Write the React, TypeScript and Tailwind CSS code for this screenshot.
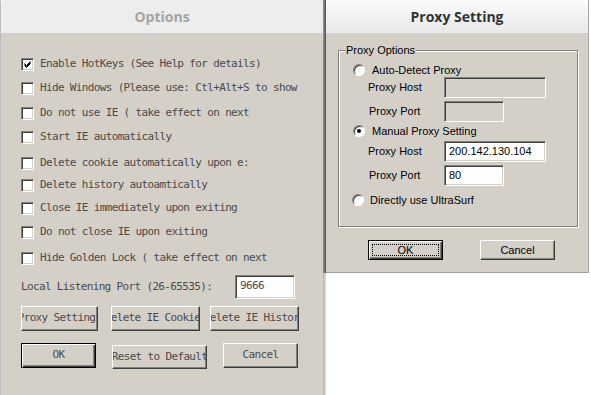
const rows = [
  { text: "Enable HotKeys (See Help for details)", checked: true, mt: "mt-0" },
  { text: "Hide Windows (Please use: Ctl+Alt+S to show", mt: "mt-[11px]" },
  { text: "Do not use IE ( take effect on next", mt: "mt-[12px]" },
  { text: "Start IE automatically", mt: "mt-[11px]" },
  { text: "Delete cookie automatically upon e:", mt: "mt-[13px]" },
  { text: "Delete history autoamtically", mt: "mt-[9px]" },
  { text: "Close IE immediately upon exiting", mt: "mt-[10px]" },
  { text: "Do not close IE upon exiting", mt: "mt-[11px]" },
  { text: "Hide Golden Lock ( take effect on next", mt: "mt-[13px]" },
];

function CheckBox({ checked }: { checked?: boolean }) {
  return (
    <div className="w-[13px] h-[13px] shrink-0 bg-white border border-t-[#808080] border-l-[#808080] border-r-white border-b-white shadow-[inset_1px_1px_0_#404040,inset_-1px_-1px_0_#d4d0c8] flex items-center justify-center">
      {checked && (
        <svg width="9" height="9" viewBox="0 0 9 9">
          <path d="M1.5 3.5 L3.5 5.5 L7.5 1.5 M1.5 4.5 L3.5 6.5 L7.5 2.5 M1.5 5.5 L3.5 7.5 L7.5 3.5" stroke="#000" strokeWidth="1" fill="none" />
        </svg>
      )}
    </div>
  );
}

function Radio({ checked }: { checked?: boolean }) {
  return (
    <div className="w-[12px] h-[12px] shrink-0 rounded-full bg-white border border-t-[#808080] border-l-[#808080] border-r-white border-b-white shadow-[inset_1px_1px_0_#404040] flex items-center justify-center">
      {checked && <div className="w-[4px] h-[4px] rounded-full bg-black" />}
    </div>
  );
}

function MonoButton({ label, w, h = "h-[25px]", def }: { label: string; w: string; h?: string; def?: boolean }) {
  const edge = def
    ? "border border-black shadow-[inset_1px_1px_0_#fff,inset_-1px_-1px_0_#404040,inset_-2px_-2px_0_#808080]"
    : "border border-t-white border-l-white border-r-[#404040] border-b-[#404040] shadow-[inset_-1px_-1px_0_#808080]";
  return (
    <div className={`${w} ${h} ${edge} bg-[#d4d0c8] flex items-center justify-center overflow-hidden whitespace-nowrap`}>
      {label}
    </div>
  );
}

function Field({ value, w, disabled }: { value?: string; w: string; disabled?: boolean }) {
  return (
    <div
      className={`${w} h-[21px] ${disabled ? "bg-[#d4d0c8]" : "bg-white"} border border-t-[#808080] border-l-[#808080] border-r-white border-b-white shadow-[inset_1px_1px_0_#404040,inset_-1px_-1px_0_#d4d0c8] pl-[4px] flex items-center`}
    >
      {value}
    </div>
  );
}

export default function App() {
  return (
    <div className="flex w-[591px] h-[395px] bg-white overflow-hidden">
      {/* Options window */}
      <div className="w-[323px] h-full flex flex-col border-l border-[#bdbdbd]">
        <div className="h-[33px] shrink-0 rounded-tl-[5px] bg-[#ededed] flex items-center justify-center font-['Open_Sans',sans-serif] font-bold text-[14px] text-[#a4a4a4]">
          Options
        </div>
        <div className="flex-1 bg-[#d4d0c8] pl-[20px] pt-[25px] font-['DejaVu_Sans_Mono',monospace] text-[11px] tracking-[-0.65px] text-[#4a4a4a]">
          {rows.map((r) => (
            <div key={r.text} className={`flex items-center h-[13px] gap-[6px] whitespace-nowrap ${r.mt}`}>
              <CheckBox checked={r.checked} />
              <span>{r.text}</span>
            </div>
          ))}

          <div className="flex items-center mt-[10px] h-[24px]">
            <span className="w-[214px] whitespace-nowrap">Local Listening Port (26-65535):</span>
            <div className="w-[60px] h-[24px] bg-white border border-t-[#808080] border-l-[#808080] border-r-white border-b-white shadow-[inset_1px_1px_0_#404040,inset_-1px_-1px_0_#d4d0c8] pl-[4px] pt-[3px] leading-[13px]">
              9666
            </div>
          </div>

          <div className="flex mt-[7px]">
            <MonoButton label="Proxy Settings" w="w-[77px]" />
            <div className="ml-[13px]">
              <MonoButton label="Delete IE Cookies" w="w-[89px]" />
            </div>
            <div className="ml-[10px]">
              <MonoButton label="Delete IE History" w="w-[89px]" />
            </div>
          </div>

          <div className="flex items-start mt-[12px]">
            <MonoButton label="OK" w="w-[75px]" def />
            <div className="ml-[16px] mt-[2px]">
              <MonoButton label="Reset to Default" w="w-[95px]" h="h-[24px]" />
            </div>
            <div className="ml-[16px]">
              <MonoButton label="Cancel" w="w-[75px]" />
            </div>
          </div>
        </div>
      </div>

      {/* window shadow */}
      <div className="w-[3px] h-full flex flex-col">
        <div className="h-[273px] bg-gradient-to-r from-[#9a9a9a] to-[#4d4d4d]" />
        <div className="flex-1 bg-gradient-to-r from-[#b4b4b4] to-[#dedede]" />
      </div>

      {/* Proxy Setting window */}
      <div className="w-[265px] h-full flex flex-col">
        <div className="w-[263px] flex flex-col border-r border-[#a8a8a8]">
          <div className="h-[33px] rounded-t-[6px] bg-gradient-to-b from-[#fbfbfb] to-[#e9e9e9] flex items-center justify-center font-['Open_Sans',sans-serif] font-bold text-[14px] text-[#2e3436]">
            Proxy Setting
          </div>
          <div className="h-[240px] bg-[#d4d0c8] border-b border-[#9c9c9c] pt-[17px] pl-[12px] font-['Liberation_Sans',Arial,sans-serif] text-[11px] text-black">
            <div className="relative w-[240px] h-[177px] border border-[#808080] shadow-[inset_1px_1px_0_#fff,1px_1px_0_#fff] pt-[12px]">
              <span className="absolute left-[6px] top-[-7px] px-[1px] bg-[#d4d0c8] leading-[13px]">Proxy Options</span>

              <div className="flex items-center h-[14px] pl-[14px] gap-[7px]">
                <Radio />
                <span>Auto-Detect Proxy</span>
              </div>
              <div className="flex items-center pl-[29px]">
                <span className="w-[76px]">Proxy Host</span>
                <Field w="w-[102px]" disabled />
              </div>
              <div className="flex items-center pl-[29px] mt-[3px]">
                <span className="w-[76px] pl-[1px]">Proxy Port</span>
                <Field w="w-[60px]" disabled />
              </div>

              <div className="flex items-center h-[14px] pl-[14px] gap-[7px] mt-[2px]">
                <Radio checked />
                <span>Manual Proxy Setting</span>
              </div>
              <div className="flex items-center pl-[29px] mt-[3px]">
                <span className="w-[76px]">Proxy Host</span>
                <Field w="w-[102px]" value="200.142.130.104" />
              </div>
              <div className="flex items-center pl-[29px] mt-[3px]">
                <span className="w-[76px] pl-[1px]">Proxy Port</span>
                <Field w="w-[60px]" value="80" />
              </div>

              <div className="flex items-center h-[14px] pl-[13px] gap-[6px] mt-[7px]">
                <Radio />
                <span>Directly use UltraSurf</span>
              </div>
            </div>

            <div className="flex mt-[13px] pl-[30px]">
              <div className="w-[75px] h-[20px] border border-black bg-[#d4d0c8] shadow-[inset_1px_1px_0_#fff,inset_-1px_-1px_0_#404040,inset_-2px_-2px_0_#808080] p-[3px]">
                <div className="w-full h-full border border-dotted border-black flex items-center justify-center">OK</div>
              </div>
              <div className="ml-[37px] w-[75px] h-[20px] bg-[#d4d0c8] border border-t-white border-l-white border-r-[#404040] border-b-[#404040] shadow-[inset_-1px_-1px_0_#808080] flex items-center justify-center">
                Cancel
              </div>
            </div>
          </div>
        </div>
        <div className="flex-1 bg-white" />
      </div>
    </div>
  );
}
